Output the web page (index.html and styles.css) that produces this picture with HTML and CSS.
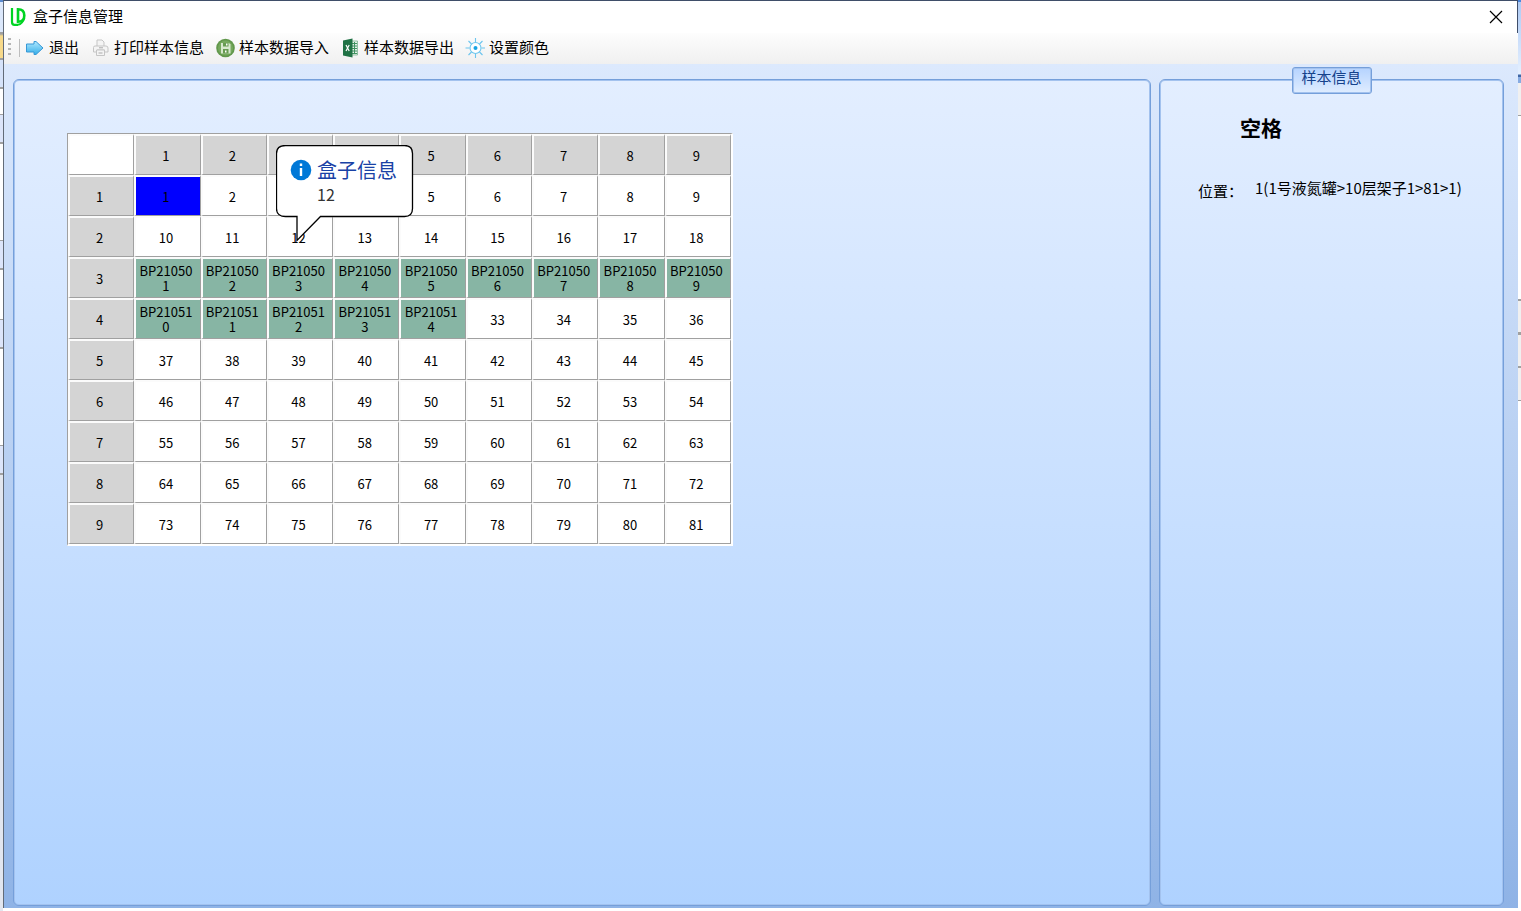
FILE: index.html
```html
<!DOCTYPE html>
<html lang="zh-CN">
<head>
<meta charset="utf-8">
<title>盒子信息管理</title>
<link rel="stylesheet" href="styles.css">
</head>
<body>
<div class="desktop">
  <div class="behind behind-left"></div>
  <main class="window">
    <header class="titlebar">
      <svg class="logo" width="16" height="20" viewBox="0 0 16 20" fill="none" stroke="#00d423">
        <path d="M2 1V15Q2 17.800 4.500 17.800H8" stroke-width="2.200"/>
        <path d="M8 2.200V14.800Q14.300 14.800 14.300 8.500Q14.300 2.200 8 2.200Z" stroke-width="2.600"/>
        <path d="M8 17.800Q12.500 17 14.300 11" stroke-width="2"/>
      </svg>
      <h1 class="title">盒子信息管理</h1>
      <button class="close" type="button" aria-label="关闭">
        <svg width="14" height="14" viewBox="0 0 14 14" stroke="#000" stroke-width="1.200"><path d="M1 1L13 13M13 1L1 13"/></svg>
      </button>
    </header>
    <nav class="toolbar">
      <span class="grip"></span>
      <span class="divider"></span>
      <button class="tool" type="button">
        <svg width="20" height="20" viewBox="0 0 20 20"><defs><linearGradient id="arrow" x2="0" y2="1"><stop stop-color="#aee8ff"/><stop offset="1" stop-color="#35aee8"/></linearGradient></defs><path d="M1.500 6H9V3.500L11 3.500L18 10L11 16.500H9V14H1.500Z" fill="url(#arrow)" stroke="#3798d6" stroke-linejoin="round"/></svg>
        <span>退出</span>
      </button>
      <button class="tool" type="button">
        <svg width="20" height="20" viewBox="0 0 20 20" fill="#f4f4f4" stroke="#c5c5c5"><path d="M7 8V2H12L14 4V8"/><path d="M3.500 14V9.500Q3.500 8 5 8H16Q18 8 18 10V14H14.500V12H7V14Z"/><path d="M6.500 12H14.500V17.500H6.500Z"/><path d="M8.500 15H12.500M9 9.800H13" stroke="#aaa"/></svg>
        <span>打印样本信息</span>
      </button>
      <button class="tool" type="button">
        <svg width="20" height="20" viewBox="0 0 20 20"><circle cx="10.500" cy="10" r="9.300" fill="#62984c"/><circle cx="10.500" cy="10" r="7.500" fill="#76a95e"/><path d="M6 5H14L15.500 6.500V15.500H6Z" fill="#d7e8ce"/><path d="M8 5H13.500V8.500H8ZM8 11H13.500V15.500H8Z" fill="#679b51"/><path d="M11 5.500H12.500V7.500H11ZM10 12.500H11.500V14.500H10Z" fill="#fff"/></svg>
        <span>样本数据导入</span>
      </button>
      <button class="tool" type="button">
        <svg width="20" height="20" viewBox="0 0 20 20"><path d="M11 3H17.500V17H11Z" fill="#e5f1e9" stroke="#6aaa83" stroke-width=".7"/><path d="M12 5.500H17M12 8H17M12 10.500H17M12 13H17M12 15.500H17M14.500 4V16" stroke="#3f9160"/><path d="M3 2.500L12.500.500V19.500L3 17.500Z" fill="#207245"/><path d="M6 7L9.200 13M9.200 7L6 13" stroke="#fff" stroke-width="1.200"/></svg>
        <span>样本数据导出</span>
      </button>
      <button class="tool" type="button">
        <svg width="20" height="20" viewBox="0 0 20 20" fill="none" stroke="#6cc5ee" stroke-width="1.100"><circle cx="10.500" cy="10" r="5.500" fill="#fff"/><path d="M10.500 0V4M10.500 16V20M.500 10H4.500M16.500 10H20.500M3.500 3L6.500 6M14.500 14L17.500 17M17.500 3L14.500 6M6.500 14L3.500 17"/><circle cx="10.500" cy="10" r="2" fill="#18a4e4" stroke="none"/></svg>
        <span>设置颜色</span>
      </button>
    </nav>
    <div class="workspace">
      <section class="panel box-panel">
        <div class="grid-holder">
          <table class="grid">
            <tr><td></td><th>1</th><th>2</th><th></th><th></th><th>5</th><th>6</th><th>7</th><th>8</th><th>9</th></tr>
            <tr><th>1</th><td class="selected">1</td><td>2</td><td></td><td></td><td>5</td><td>6</td><td>7</td><td>8</td><td>9</td></tr>
            <tr><th>2</th><td>10</td><td>11</td><td>12</td><td>13</td><td>14</td><td>15</td><td>16</td><td>17</td><td>18</td></tr>
            <tr><th>3</th><td class="used">BP210501</td><td class="used">BP210502</td><td class="used">BP210503</td><td class="used">BP210504</td><td class="used">BP210505</td><td class="used">BP210506</td><td class="used">BP210507</td><td class="used">BP210508</td><td class="used">BP210509</td></tr>
            <tr><th>4</th><td class="used">BP210510</td><td class="used">BP210511</td><td class="used">BP210512</td><td class="used">BP210513</td><td class="used">BP210514</td><td>33</td><td>34</td><td>35</td><td>36</td></tr>
            <tr><th>5</th><td>37</td><td>38</td><td>39</td><td>40</td><td>41</td><td>42</td><td>43</td><td>44</td><td>45</td></tr>
            <tr><th>6</th><td>46</td><td>47</td><td>48</td><td>49</td><td>50</td><td>51</td><td>52</td><td>53</td><td>54</td></tr>
            <tr><th>7</th><td>55</td><td>56</td><td>57</td><td>58</td><td>59</td><td>60</td><td>61</td><td>62</td><td>63</td></tr>
            <tr><th>8</th><td>64</td><td>65</td><td>66</td><td>67</td><td>68</td><td>69</td><td>70</td><td>71</td><td>72</td></tr>
            <tr><th>9</th><td>73</td><td>74</td><td>75</td><td>76</td><td>77</td><td>78</td><td>79</td><td>80</td><td>81</td></tr>
          </table>
          <div class="balloon" role="tooltip">
            <svg class="balloon-shape" width="138" height="98" viewBox="0 0 138 98"><path d="M9.500 .5H128.500Q136.500 .5 136.500 8.500V63.500Q136.500 71.500 128.500 71.500H44.500L21 95.500V71.500H9.500Q.5 71.500 .5 63.500V8.500Q.5 .5 9.500 .5Z" fill="#fff" stroke="#000" stroke-width="1.300"/></svg>
            <div class="balloon-content">
              <svg width="22" height="22" viewBox="0 0 22 22"><circle cx="11" cy="11" r="10.300" fill="#0078d7"/><path d="M9.800 4.500H12.200V7H9.800ZM9.800 9H12.200V17H9.800Z" fill="#fff"/></svg>
              <div><div class="balloon-title">盒子信息</div><div class="balloon-text">12</div></div>
            </div>
          </div>
        </div>
      </section>
      <aside class="panel info-panel">
        <h2 class="caption">样本信息</h2>
        <h3 class="sample">空格</h3>
        <dl class="location"><dt>位置：</dt><dd>1(1号液氮罐&gt;10层架子1&gt;81&gt;1)</dd></dl>
      </aside>
    </div>
  </main>
  <div class="behind behind-right"></div>
</div>
</body>
</html>
```
FILE: styles.css
```css
* { box-sizing: border-box; }

body {
  margin: 0;
  background: #fff;
  color: #000;
  font-family: "Noto Sans CJK SC", "Noto Sans", sans-serif;
  font-size: 15px;
  line-height: 20px;
}

h1, h2, h3, dl, dd { margin: 0; font-size: inherit; font-weight: normal; }

button {
  border: 0;
  padding: 0;
  background: none;
  color: inherit;
  font: inherit;
}

.desktop { display: flex; min-height: 100vh; }

.behind { width: 3px; flex: none; }

.behind-left {
  background: linear-gradient(#5b8bd0 0 2px, #dce8fb 2px 32px, #a0a0a0 32px 34px, #f7d98a 36px 58px, #a0a0a0 58px 60px, #d6e3fa 60px 87px, #a0a0a0 87px 89px, #fff 89px 114px, #a0a0a0 114px 115px, #dce5fa 115px 142px, #a0a0a0 142px 144px, #fff 144px 240px, #a0a0a0 240px 241px, #dce5fa 241px 268px, #a0a0a0 268px 270px, #fff 270px 319px, #a0a0a0 319px 320px, #dce5fa 320px 347px, #a0a0a0 347px 349px, #fff 349px 445px, #a0a0a0 445px 446px, #dce5fa 446px 473px, #a0a0a0 473px 475px, #e2e6ef 475px);
}

.behind-right {
  background: linear-gradient(#4a86dd 0 2px, #aecbf5 2px, #e5f0ff 74px, #3f66a5 75px 77px, #86abe2 77px 83px, #f0f0f0 83px 115px, #a0a0a0 115px 116px, #fff 116px 299px, #a0a0a0 299px 301px, #f0f0f0 301px 332px, #a0a0a0 332px 335px, #f0f0f0 335px 366px, #a0a0a0 366px 368px, #f0f0f0 368px 400px, #a0a0a0 400px 401px, #fff 401px);
}

.window {
  flex: 1;
  min-width: 0;
  display: flex;
  flex-direction: column;
  margin-bottom: 3px;
  border-top: 1px solid #3f4e69;
  border-left: 1px solid #626b78;
}

.titlebar {
  display: flex;
  align-items: center;
  gap: 7px;
  height: 32px;
  padding: 0 14px 0 6px;
  border-right: 1px solid #3f4e69;
  background: #fff;
}

.title { padding-bottom: 2px; }

.close { display: flex; margin-left: auto; }

.toolbar {
  display: flex;
  align-items: center;
  gap: 11px;
  height: 31px;
  padding: 0 0 2px 4px;
  background: linear-gradient(#fdfdfd, #f0f0f0);
}

.grip {
  width: 3px;
  height: 20px;
  background: repeating-linear-gradient(#b5b5b5 0 2px, transparent 2px 5px);
}

.divider { width: 1px; height: 18px; margin: 0 -6px 0 -3px; background: #bdbdbd; }

.tool { display: flex; align-items: center; gap: 4px; white-space: nowrap; }
.tool span { padding-bottom: 1px; }

.workspace {
  flex: 1;
  display: flex;
  gap: 8px;
  padding: 15px 14px 2px 9px;
  background: linear-gradient(#dce9fd, #8fb3e6);
}

.panel {
  border: 1px solid #759fda;
  border-radius: 6px;
  background: linear-gradient(#e3eeff, #afd2ff);
  box-shadow: inset 0 0 0 1px #a3c2ee;
}

.box-panel { flex: 1; min-width: 0; padding: 53px; }

.grid-holder { position: relative; width: 666px; }

.grid {
  width: 100%;
  table-layout: fixed;
  border-collapse: separate;
  border-spacing: 0;
  border: 1px solid #a0a0a0;
  border-right: 2px solid #fff;
  border-bottom: 2px solid #fff;
  background: #fff;
  font-size: 13px;
  line-height: 15px;
}

.grid td, .grid th {
  height: 41px;
  padding: 0 6px 0 2px;
  border: 2px solid #fbfbfb;
  border-right: 1px solid #a0a0a0;
  border-bottom: 1px solid #a0a0a0;
  text-align: center;
  font-weight: normal;
  word-break: break-all;
  background-clip: padding-box;
}

.grid th { background-color: #d4d4d4; }
.grid .used { background-color: #87b5a4; }
.grid .selected { background-color: #00f; }

.balloon { position: absolute; left: 209px; top: 12px; width: 138px; }
.balloon-shape { position: absolute; left: 0; top: 0; }
.balloon-content { position: relative; display: flex; gap: 5px; padding: 14px; }
.balloon-content > svg { flex: none; }
.balloon-title { color: #1941a5; font-size: 20px; line-height: 22px; white-space: nowrap; }
.balloon-text { color: #333; font-size: 16px; line-height: 26px; }

.info-panel { flex: none; width: 345px; }

.caption {
  width: 80px;
  height: 27px;
  margin: -13px auto 0;
  border: 1px solid #759fda;
  border-radius: 3px;
  background: linear-gradient(#b5d3ff, #e0edff);
  box-shadow: inset 0 0 0 1px #a3c2ee;
  color: #15428b;
  text-align: center;
  line-height: 18px;
}

.sample { margin: 19px 0 0 80px; font-size: 21px; font-weight: bold; line-height: 28px; }

.location { display: flex; margin: 37px 0 0 38px; gap: 12px; white-space: nowrap; }
.location dt { padding-top: 3px; }
```
